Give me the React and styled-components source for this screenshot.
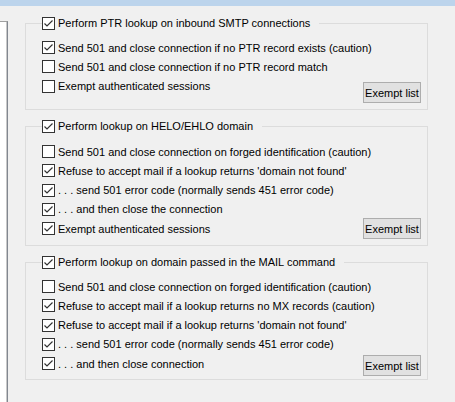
import React from 'react'
import styled, { createGlobalStyle } from 'styled-components'

const GlobalStyle = createGlobalStyle`
  html, body {
    margin: 0;
    padding: 0;
    background: #f0f0f0;
  }
  body {
    font-family: "Liberation Sans", Arial, sans-serif;
    font-size: 11px;
    color: #000;
  }
`

const Page = styled.div`
  width: 455px;
  height: 402px;
  overflow: hidden;
  background: #f0f0f0;
`

const TopBand = styled.div`
  height: 6px;
  background: #bcd4ec;
`

const Body = styled.div`
  display: flex;
  align-items: flex-start;
`

const SidePanel = styled.div`
  width: 7px;
  height: 390px;
  margin-top: 15px;
  background: #fff;
  border-top: 1px solid #a0a0a0;
  border-right: 1px solid #828790;
  box-shadow: inset -1px 0 0 #c8c8c8;
`

const Groups = styled.div`
  display: flex;
  flex-direction: column;
  margin-left: 17px;
  padding-top: 11px;
`

const Group = styled.fieldset`
  box-sizing: border-box;
  width: 403px;
  margin: 0 0 10px 0;
  padding: ${p => p.$padTop}px 6px ${p => p.$padBottom}px 16px;
  border: 1px solid #dcdcdc;
  min-inline-size: 0;
`

const Legend = styled.legend`
  display: flex;
  align-items: center;
  gap: 3px;
  height: 13px;
  padding: 0 9px 0 0;
  line-height: 13px;
`

const Row = styled.div`
  display: flex;
  align-items: flex-start;
  min-height: 19.25px;
`

const Label = styled.label`
  display: flex;
  align-items: center;
  gap: 3px;
  height: 19.25px;
  white-space: nowrap;
`

const Box = styled.span`
  box-sizing: border-box;
  display: inline-flex;
  width: 13px;
  height: 13px;
  flex: none;
  background: #fff;
  border: 1px solid #333;
`

const Button = styled.button`
  box-sizing: border-box;
  width: 58px;
  height: 21px;
  margin-left: auto;
  margin-top: ${p => p.$offset}px;
  padding: 0;
  background: #e1e1e1;
  border: 1px solid #adadad;
  font-family: "Liberation Sans", Arial, sans-serif;
  font-size: 11px;
  color: #000;
`

const CheckBox = ({ checked }) => (
  <Box>
    {checked && (
      <svg width="11" height="11" viewBox="0 0 11 11">
        <polyline points="1.5,5.5 4,8 9.5,2.5" fill="none" stroke="#333" strokeWidth="1.2" />
      </svg>
    )}
  </Box>
)

const groups = [
  {
    title: 'Perform PTR lookup on inbound SMTP connections',
    padTop: 8,
    padBottom: 6,
    btnOffset: 5.5,
    items: [
      ['Send 501 and close connection if no PTR record exists (caution)', true],
      ['Send 501 and close connection if no PTR record match', false],
      ['Exempt authenticated sessions', false],
    ],
  },
  {
    title: 'Perform lookup on HELO/EHLO domain',
    padTop: 9,
    padBottom: 6,
    btnOffset: -1,
    items: [
      ['Send 501 and close connection on forged identification (caution)', false],
      ["Refuse to accept mail if a lookup returns 'domain not found'", true],
      ['. . . send 501 error code (normally sends 451 error code)', true],
      ['. . . and then close the connection', true],
      ['Exempt authenticated sessions', true],
    ],
  },
  {
    title: 'Perform lookup on domain passed in the MAIL command',
    padTop: 8,
    padBottom: 3,
    btnOffset: 1,
    items: [
      ['Send 501 and close connection on forged identification (caution)', false],
      ['Refuse to accept mail if a lookup returns no MX records (caution)', true],
      ["Refuse to accept mail if a lookup returns 'domain not found'", true],
      ['. . . send 501 error code (normally sends 451 error code)', true],
      ['. . . and then close connection', true],
    ],
  },
]

const App = () => {
  return (
    <>
      <GlobalStyle />
      <Page>
        <TopBand />
        <Body>
          <SidePanel />
          <Groups>
            {groups.map((group, gi) => (
              <Group key={gi} $padTop={group.padTop} $padBottom={group.padBottom}>
                <Legend>
                  <CheckBox checked />
                  {group.title}
                </Legend>
                {group.items.map(([text, checked], i) => {
                  const last = i === group.items.length - 1
                  return (
                    <Row key={i}>
                      <Label>
                        <CheckBox checked={checked} />
                        {text}
                      </Label>
                      {last && <Button $offset={group.btnOffset}>Exempt list</Button>}
                    </Row>
                  )
                })}
              </Group>
            ))}
          </Groups>
        </Body>
      </Page>
    </>
  )
}

export default App
